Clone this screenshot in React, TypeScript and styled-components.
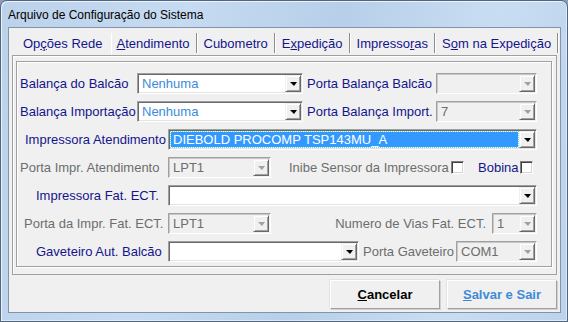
import { Fragment } from "react";
import styled, { createGlobalStyle } from "styled-components";

const GlobalStyle = createGlobalStyle`
  html, body {
    margin: 0;
    padding: 0;
    background: #8a9fb8;
  }
  body {
    width: 568px;
    height: 322px;
    overflow: hidden;
    font-family: "Liberation Sans", Arial, sans-serif;
  }
`;

const tabs = [
    { label: "Opções Rede", key: 2 },
    { label: "Atendimento", key: 0 },
    { label: "Cubometro", key: -1 },
    { label: "Expedição", key: 1 },
    { label: "Impressoras", key: 8 },
    { label: "Som na Expedição", key: 1 },
];
const activeTab = 1;

// underline the accelerator letter, like the windows dialog does
const Accel = ({ text, at }: { text: string, at: number }) => {
    if (at < 0) return <>{text}</>;
    return (
        <>
            {text.slice(0, at)}
            <u>{text[at]}</u>
            {text.slice(at + 1)}
        </>
    );
};

interface comboProps {
    w: number,
    value?: string,
    disabled?: boolean,
    tone?: "blue" | "normal",
    selected?: boolean,
}

const Combo = ({ w, value = "", disabled = false, tone = "normal", selected = false }: comboProps) => (
    <StyledCombo $w={w} $disabled={disabled}>
        <ComboText $disabled={disabled} $tone={tone} $selected={selected}>{value}</ComboText>
        <DropButton>
            <Arrow $disabled={disabled} />
        </DropButton>
    </StyledCombo>
);

const App = () => {
    return (
        <>
            <GlobalStyle />
            <Window>
                <TitleBar>Arquivo de Configuração do Sistema</TitleBar>
                <Client>
                    <TabRow>
                        {tabs.map((t, i) => (
                            <Fragment key={t.label}>
                                <Tab $active={i === activeTab}>
                                    <Accel text={t.label} at={t.key} />
                                </Tab>
                                <TabSep $hidden={i === activeTab - 1} />
                            </Fragment>
                        ))}
                    </TabRow>
                    <Page>
                        <Group>
                            <Row>
                                <Label $w={117}>Balança do Balcão</Label>
                                <Combo w={166} value="Nenhuma" tone="blue" />
                                <Label $w={133} $pl={4}>Porta Balança Balcão</Label>
                                <Combo w={101} disabled />
                            </Row>
                            <Row>
                                <Label $w={117}>Balança Importação</Label>
                                <Combo w={166} value="Nenhuma" tone="blue" />
                                <Label $w={133} $pl={4}>Porta Balança Import.</Label>
                                <Combo w={101} value="7" disabled />
                            </Row>
                            <Row>
                                <Label $w={148} $pl={5}>Impressora Atendimento</Label>
                                <Combo w={369} value="DIEBOLD PROCOMP TSP143MU_A" selected />
                            </Row>
                            <Row>
                                <Label $w={148} $off>Porta Impr. Atendimento</Label>
                                <Combo w={103} value="LPT1" disabled />
                                <Label $w={180} $pl={18} $off>Inibe Sensor da Impressora</Label>
                                <CheckBox />
                                <Label $w={56} $pl={14}>Bobina</Label>
                                <CheckBox />
                            </Row>
                            <Row>
                                <Label $w={148} $pl={16}>Impressora Fat. ECT.</Label>
                                <Combo w={369} />
                            </Row>
                            <Row>
                                <Label $w={148} $pl={4} $off>Porta da Impr. Fat. ECT.</Label>
                                <Combo w={103} value="LPT1" disabled />
                                <Label $w={221} $pr={6} $right $off>Numero de Vias Fat. ECT.</Label>
                                <Combo w={45} value="1" disabled />
                            </Row>
                            <Row>
                                <Label $w={148} $pl={16}>Gaveteiro Aut. Balcão</Label>
                                <Combo w={191} />
                                <Label $w={97} $pl={4} $off>Porta Gaveteiro</Label>
                                <Combo w={81} value="COM1" disabled />
                            </Row>
                        </Group>
                    </Page>
                    <ButtonBar>
                        <Button><Accel text="Cancelar" at={0} /></Button>
                        <Button $blue><Accel text="Salvar e Sair" at={0} /></Button>
                    </ButtonBar>
                </Client>
            </Window>
        </>
    );
};

const Window = styled.div`
    width: 568px;
    height: 322px;
    box-sizing: border-box;
    display: flex;
    flex-direction: column;
    border: 1px solid #4f6580;
    border-radius: 7px 7px 0 0;
    background: linear-gradient(100deg, #bcd2eb 0%, #c6dbf1 30%, #b7cfe9 55%, #c9ddf2 80%, #bcd3ec 100%);
    padding: 0 6px 8px 7px;
    box-shadow: inset 1px 1px 0 rgba(255, 255, 255, 0.7), inset -1px -1px 0 rgba(255, 255, 255, 0.5);
`;

const TitleBar = styled.div`
    height: 27px;
    display: flex;
    align-items: center;
    font-family: "Liberation Sans", Arial, sans-serif;
    font-size: 12px;
    color: #000;
    padding-top: 1px;
    box-sizing: border-box;
`;

const Client = styled.div`
    flex: 1;
    display: flex;
    flex-direction: column;
    background: #f0f0f0;
    border: 1px solid #8294ab;
    padding: 0 3px 3px 3px;
`;

const TabRow = styled.div`
    height: 27px;
    box-sizing: border-box;
    display: flex;
    align-items: stretch;
    padding: 5px 0 0 5px;
`;

const Tab = styled.div<{ $active: boolean }>`
    display: flex;
    align-items: center;
    padding: 0 6px 2px 6px;
    font-size: 13px;
    color: #14148c;
    white-space: nowrap;
    box-shadow: ${p => p.$active ? "inset 1px 0 0 #ffffff" : "none"};
`;

const TabSep = styled.span<{ $hidden: boolean }>`
    width: 2px;
    flex: none;
    margin: 0 0 2px 0;
    background: ${p => p.$hidden ? "transparent" : "linear-gradient(90deg, #8c8c8c 50%, #ffffff 50%)"};
`;

const Page = styled.div`
    height: 220px;
    box-sizing: border-box;
    border: 1px solid #a0a0a0;
    box-shadow: inset 1px 1px 0 #ffffff;
    padding: 5px 4px 7px 3px;
`;

const Group = styled.div`
    height: 206px;
    box-sizing: border-box;
    border: 1px solid #a0a0a0;
    box-shadow: inset 1px 1px 0 #ffffff, 1px 1px 0 #ffffff;
    padding: 11px 0 4px 3px;
    display: flex;
    flex-direction: column;
    gap: 7px;
`;

const Row = styled.div`
    height: 21px;
    display: flex;
    align-items: center;
`;

const Label = styled.div<{ $w: number, $pl?: number, $pr?: number, $off?: boolean, $right?: boolean }>`
    width: ${p => p.$w}px;
    flex: none;
    box-sizing: border-box;
    padding-left: ${p => p.$pl ?? 0}px;
    padding-right: ${p => p.$pr ?? 0}px;
    text-align: ${p => p.$right ? "right" : "left"};
    font-size: 13px;
    white-space: nowrap;
    color: ${p => p.$off ? "#6d6d6d" : "#14148c"};
`;

const StyledCombo = styled.div<{ $w: number, $disabled: boolean }>`
    width: ${p => p.$w}px;
    height: 21px;
    flex: none;
    box-sizing: border-box;
    display: flex;
    align-items: stretch;
    padding: 1px;
    border: 1px solid;
    border-color: #a0a0a0 #ffffff #ffffff #a0a0a0;
    box-shadow: ${p => p.$disabled
        ? "inset 1px 1px 0 #c8c8c8"
        : "inset 1px 1px 0 #696969, inset -1px -1px 0 #e3e3e3"};
    background: ${p => p.$disabled ? "#f0f0f0" : "#ffffff"};
`;

const ComboText = styled.div<{ $disabled: boolean, $tone: string, $selected: boolean }>`
    flex: 1;
    min-width: 0;
    display: flex;
    align-items: center;
    margin: 1px;
    padding-left: 2px;
    font-size: 13px;
    white-space: nowrap;
    overflow: hidden;
    color: ${p => p.$disabled ? "#6d6d6d" : p.$tone === "blue" ? "#3a8bd9" : "#000000"};
    ${p => p.$selected && `
        background: #3399ff;
        color: #ffffff;
        outline: 1px dotted #5fe3d8;
        outline-offset: 0;
    `}
`;

const DropButton = styled.div`
    width: 16px;
    flex: none;
    box-sizing: border-box;
    display: flex;
    align-items: center;
    justify-content: center;
    background: #f0f0f0;
    border: 1px solid;
    border-color: #f0f0f0 #696969 #696969 #f0f0f0;
    box-shadow: inset 1px 1px 0 #ffffff, inset -1px -1px 0 #a0a0a0;
`;

const Arrow = styled.span<{ $disabled: boolean }>`
    width: 0;
    height: 0;
    border-left: 4px solid transparent;
    border-right: 3px solid transparent;
    border-top: 4px solid ${p => p.$disabled ? "#a0a0a0" : "#000000"};
    margin-top: 1px;
`;

const CheckBox = styled.span`
    width: 13px;
    height: 13px;
    flex: none;
    box-sizing: border-box;
    background: #ffffff;
    border: 1px solid;
    border-color: #808080 #ffffff #ffffff #808080;
    box-shadow: inset 1px 1px 0 #404040, inset -1px -1px 0 #d4d4d4;
`;

const ButtonBar = styled.div`
    display: flex;
    justify-content: flex-end;
    gap: 7px;
    margin-top: 5px;
`;

const Button = styled.div<{ $blue?: boolean }>`
    width: 110px;
    height: 29px;
    box-sizing: border-box;
    display: flex;
    align-items: center;
    justify-content: center;
    font-size: 13px;
    font-weight: bold;
    color: ${p => p.$blue ? "#3d8bd8" : "#000000"};
    background: #f0f0f0;
    border: 1px solid;
    border-color: #ffffff #a0a0a0 #a0a0a0 #ffffff;
    box-shadow: 1px 1px 0 #d0d0d0, -1px -1px 0 #e3e3e3;
`;

export default App
